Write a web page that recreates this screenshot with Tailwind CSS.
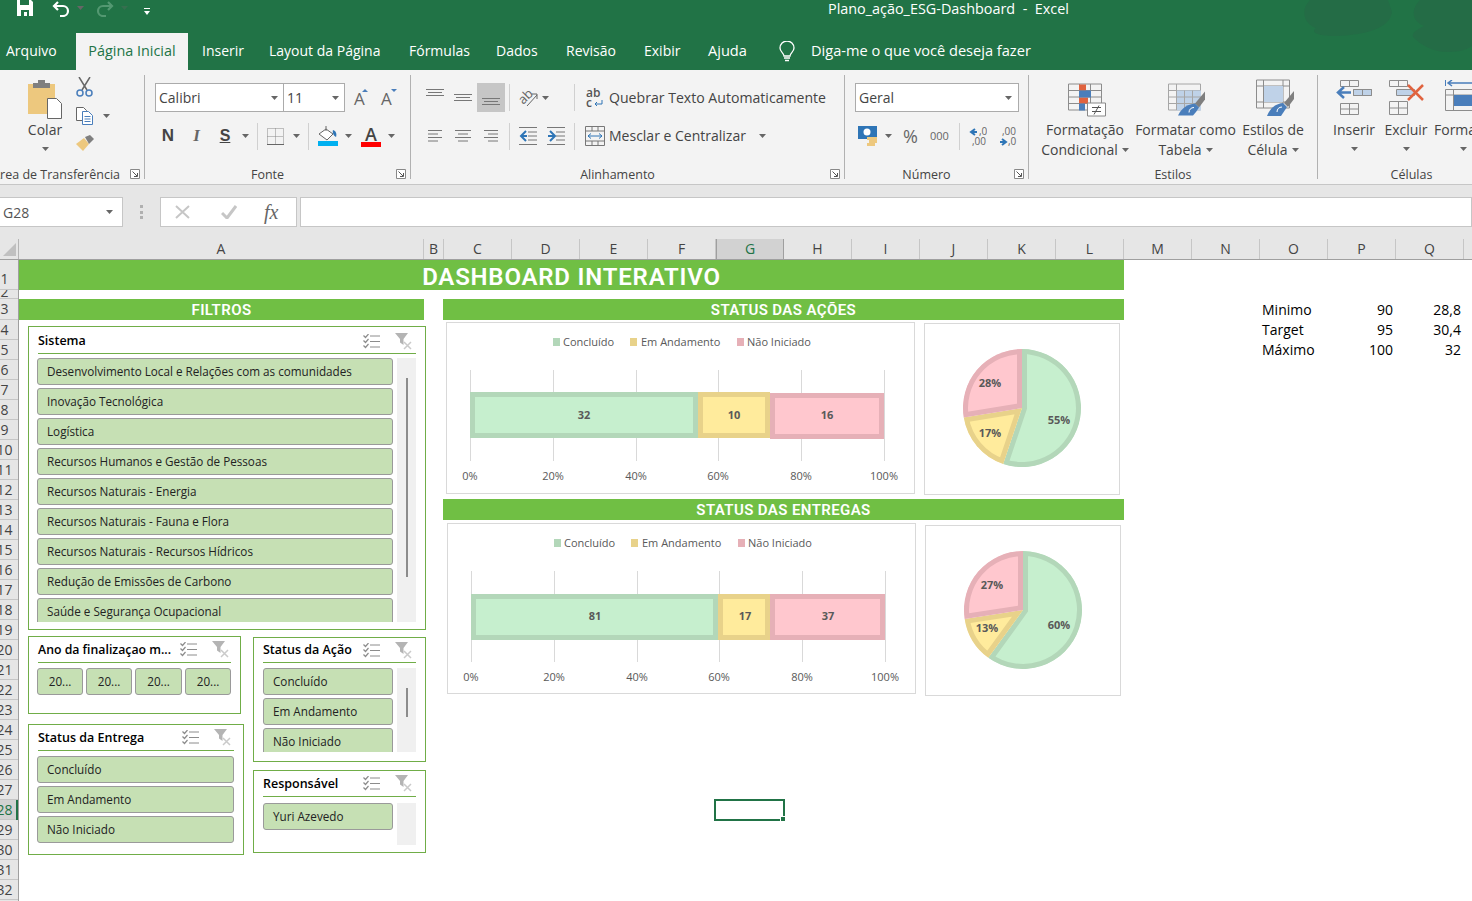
<!DOCTYPE html>
<html lang="pt-BR">
<head>
  <meta charset="UTF-8">
  <title>Plano_ação_ESG-Dashboard - Excel</title>
  <script src="https://cdn.jsdelivr.net/npm/@tailwindcss/browser@4"></script>
</head>
<body class="bg-white overflow-hidden font-['Open_Sans',sans-serif] text-[#444]">

<!-- icones repetidos -->
<svg class="hidden">
  <symbol id="arrow" viewBox="0 0 7 4"><path d="M0 0h7L3.500 4z" fill="#666"/></symbol>
  <symbol id="launcher" viewBox="0 0 10 10"><path d="M.5.500h9v9h-9z" fill="#fff" stroke="#888"/><path d="M2.500 2.500l4.500 4.500M7.500 4v3.500H4" fill="none" stroke="#555"/></symbol>
  <symbol id="multi" viewBox="0 0 17 15"><path d="M7 2h10M7 7.500h10M7 13h10" stroke="#8c8c8c"/><path d="M.5 1.500l2 2 3-3.500M.5 6.500l2 2 3-3.500M.5 11.500l2 2 3-3.500" fill="none" stroke="#8c8c8c" stroke-width="1.200"/></symbol>
  <symbol id="clear" viewBox="0 0 18 17"><path d="M0 0h13L8.500 6v6L5 9.500V6z" fill="#b4b4b4"/><path d="M9 9l7 7M16 9l-7 7" stroke="#cacaca" stroke-width="1.500"/></symbol>
</svg>

<div class="w-[1472px] h-[901px] overflow-hidden flex flex-col">

  <!-- barra de titulo + abas -->
  <div class="relative bg-[#217346] h-[70px] shrink-0 text-white overflow-hidden">
    <svg class="absolute right-0 top-0 w-[180px] h-[70px]" viewBox="0 0 180 70"><path d="M18 0C8 10 12 24 24 28C16 34 34 38 58 35C80 33 98 26 100 12L96 0zM122 38C128 44 140 52 156 52C168 52 176 49 180 46V0H128C120 8 118 20 132 26C124 30 118 34 122 38z" fill="#246c46"/></svg>
    <div class="relative flex items-start h-[33px]">
      <svg class="ml-[17px] -mt-[1px] w-[16px] h-[17px]" viewBox="0 0 16 17"><path d="M0 0h13l3 3v14H0z" fill="#fff"/><path d="M3 1h9v5H3zM4 11h8v6h-2v-4H7v4H4z" fill="#217346"/></svg>
      <svg class="ml-[19px] mt-[1px] w-[18px] h-[16px]" viewBox="0 0 18 16"><path d="M6 1L2 5l4 4M2 5h9a5 5 0 0 1 0 10H8" fill="none" stroke="#fff" stroke-width="2.200"/></svg>
      <svg class="ml-[7px] mt-[6px] w-[7px] h-[4px]"><use href="#arrow"/></svg>
      <svg class="ml-[12px] mt-[1px] w-[18px] h-[16px] opacity-40" viewBox="0 0 18 16"><path d="M12 1l4 4-4 4M16 5H7a5 5 0 0 0 0 10h3" fill="none" stroke="#9fd0b3" stroke-width="2.200"/></svg>
      <svg class="ml-[7px] mt-[6px] w-[7px] h-[4px] opacity-30"><use href="#arrow"/></svg>
      <svg class="ml-[16px] mt-[8px] w-[6px] h-[7px]" viewBox="0 0 6 7"><path d="M0 0h6v1H0zM0 3h6L3 7z" fill="#fff"/></svg>
      <span class="absolute left-[828px] top-0 text-[14.4px] leading-[18px] whitespace-pre">Plano_ação_ESG-Dashboard  -  Excel</span>
    </div>
    <div class="relative flex h-[37px] text-[14px] leading-[35px] whitespace-nowrap">
      <span class="w-[76px] pl-[6px]">Arquivo</span>
      <span class="w-[112px] bg-[#f3f3f3] text-[#217346] text-center text-[14.4px]">Página Inicial</span>
      <span class="ml-[14px] w-[67px]">Inserir</span>
      <span class="w-[140px]">Layout da Página</span>
      <span class="w-[87px]">Fórmulas</span>
      <span class="w-[70px]">Dados</span>
      <span class="w-[78px]">Revisão</span>
      <span class="w-[64px]">Exibir</span>
      <span class="w-[71px] text-[14.6px]">Ajuda</span>
      <svg class="mt-[8px] w-[16px] h-[22px]" viewBox="0 0 16 22"><path d="M5 15c0-3-4-4-4-8a7 7 0 0 1 14 0c0 4-4 5-4 8z" fill="none" stroke="#fff" stroke-width="1.300"/><path d="M5 17h6M6 19.500h4" stroke="#fff" stroke-width="1.500"/></svg>
      <span class="ml-[16px] text-[14.6px]">Diga-me o que você deseja fazer</span>
    </div>
  </div>

  <!-- faixa de opcoes -->
  <div class="flex h-[115px] shrink-0 bg-[#f3f3f3] border-b border-[#c6c6c6] pt-[5px] text-[14px] leading-[20px] whitespace-nowrap overflow-hidden">

    <!-- area de transferencia -->
    <div class="relative w-[145px] shrink-0 h-[104px] border-r border-[#b1b1b1]">
      <div class="flex h-[89px] pl-[27px]">
        <div class="w-[36px] flex flex-col items-center">
          <svg class="mt-[5px] w-[34px] h-[39px]" viewBox="0 0 34 39"><path d="M0 4h27v30H0z" fill="#edc87e"/><path d="M5 3h5V0h7v3h5v5H5z" fill="#7f7f7f"/><path d="M19.500 18.500h9l5 5v15h-14z" fill="#fff" stroke="#666"/></svg>
          <span class="mt-[1px]">Colar</span>
          <svg class="mt-[7px] w-[7px] h-[4px]"><use href="#arrow"/></svg>
        </div>
        <div class="ml-[13px] pt-[2px] flex flex-col gap-[9px]">
          <svg class="w-[17px] h-[20px]" viewBox="0 0 17 20"><path d="M3 0l8 13M14 0L6 13" stroke="#666" stroke-width="1.500"/><circle cx="4" cy="16" r="3" fill="none" stroke="#4a7ebb" stroke-width="1.500"/><circle cx="13" cy="16" r="3" fill="none" stroke="#4a7ebb" stroke-width="1.500"/></svg>
          <div class="flex items-center h-[20px]">
            <svg class="w-[17px] h-[18px]" viewBox="0 0 17 18"><path d="M.5.500h7l3 3v10H.5z" fill="#fff" stroke="#666"/><path d="M6.500 4.500h6l4 4v9h-10z" fill="#fff" stroke="#4a7ebb"/><path d="M8.500 9.500h6M8.500 12h6M8.500 14.500h6" stroke="#4a7ebb"/></svg>
            <svg class="ml-[10px] w-[7px] h-[4px]"><use href="#arrow"/></svg>
          </div>
          <svg class="w-[18px] h-[16px]" viewBox="0 0 18 16"><path d="M0 9l8-6 5 6-6 7z" fill="#edc87e"/><path d="M9 2l5-2 4 4-5 5z" fill="#7f7f7f"/></svg>
        </div>
      </div>
      <div class="h-[20px] flex justify-end pr-[24px] text-[12.5px] leading-[21px]">Área de Transferência</div>
      <svg class="absolute right-[4px] bottom-[0px] w-[10px] h-[10px]"><use href="#launcher"/></svg>
    </div>

    <!-- fonte -->
    <div class="relative w-[266px] shrink-0 h-[104px] border-r border-[#b1b1b1]">
      <div class="h-[89px] pl-[10px] pt-[8px]">
        <div class="flex items-center h-[29px]">
          <div class="w-[129px] h-[29px] bg-white border border-[#ababab] flex items-center justify-between px-[3px] pr-[5px]">Calibri<svg class="w-[7px] h-[4px]"><use href="#arrow"/></svg></div>
          <div class="-ml-px w-[62px] h-[29px] bg-white border border-[#ababab] flex items-center justify-between px-[3px] pr-[5px]">11<svg class="w-[7px] h-[4px]"><use href="#arrow"/></svg></div>
          <div class="relative ml-[9px] w-[16px] h-[20px] text-[17px] leading-[22px] text-[#666]">A<svg class="absolute left-[8px] top-[1px] w-[6px] h-[3px]" viewBox="0 0 6 3"><path d="M0 3l3-3 3 3z" fill="#4a7ebb"/></svg></div>
          <div class="relative ml-[11px] w-[16px] h-[20px] text-[17px] leading-[22px] text-[#666]">A<svg class="absolute left-[10px] top-[1px] w-[6px] h-[3px]" viewBox="0 0 6 3"><path d="M0 0l3 3 3-3z" fill="#4a7ebb"/></svg></div>
        </div>
        <div class="flex items-center h-[24px] mt-[12px] -ml-px">
          <span class="w-[28px] text-center font-bold text-[17px] font-['Liberation_Sans',sans-serif]">N</span>
          <span class="w-[29px] text-center italic font-bold text-[17px] text-[#666] font-['Liberation_Serif',serif]">I</span>
          <span class="w-[28px] text-center font-bold text-[16px] underline font-['Liberation_Sans',sans-serif]">S</span>
          <svg class="ml-[3px] w-[7px] h-[4px]"><use href="#arrow"/></svg>
          <span class="ml-[8px] w-px h-[27px] bg-[#d0d0d0]"></span>
          <svg class="ml-[9px] w-[17px] h-[17px]" viewBox="0 0 17 17"><path d="M.5.500h16v16H.5zM8.500.500v16M.5 8.500h16" fill="none" stroke="#888" stroke-dasharray="1 1"/><path d="M0 16.500h17" stroke="#666"/></svg>
          <svg class="ml-[9px] w-[7px] h-[4px]"><use href="#arrow"/></svg>
          <span class="ml-[8px] w-px h-[27px] bg-[#d0d0d0]"></span>
          <svg class="ml-[9px] w-[20px] h-[20px]" viewBox="0 0 20 20"><path d="M1 8l7-5 7 5-6 6z" fill="#fff" stroke="#666"/><path d="M8 0v5" stroke="#666"/><path d="M15 4c3 1 4 4 3 7-2-1-4-4-3-7z" fill="#2e75b6"/><path d="M0 15h20v5H0z" fill="#00b0f0"/></svg>
          <svg class="ml-[7px] w-[7px] h-[4px]"><use href="#arrow"/></svg>
          <div class="ml-[9px] w-[20px] h-[21px] flex flex-col items-center">
            <span class="text-[18px] leading-[16px] font-semibold">A</span>
            <span class="w-[20px] h-[5px] bg-[#f00]"></span>
          </div>
          <svg class="ml-[7px] w-[7px] h-[4px]"><use href="#arrow"/></svg>
        </div>
      </div>
      <div class="h-[20px] pr-[20px] text-center text-[12.5px] leading-[21px]">Fonte</div>
      <svg class="absolute right-[4px] bottom-[0px] w-[10px] h-[10px]"><use href="#launcher"/></svg>
    </div>

    <!-- alinhamento -->
    <div class="relative w-[434px] shrink-0 h-[104px] border-r border-[#b1b1b1]">
      <div class="h-[89px] pl-[10px] pt-[8px]">
        <div class="flex items-center h-[29px]">
          <div class="w-[28px] h-[29px] flex justify-center pt-[6px]"><svg class="w-[18px] h-[8px]" viewBox="0 0 18 8"><path d="M0 .500h18M2 3.500h14M0 6.500h18" stroke="#777"/></svg></div>
          <div class="w-[28px] h-[29px] flex justify-center pt-[11px]"><svg class="w-[18px] h-[8px]" viewBox="0 0 18 8"><path d="M0 .500h18M2 3.500h14M0 6.500h18" stroke="#777"/></svg></div>
          <div class="w-[28px] h-[29px] flex justify-center pt-[15px] bg-[#c6c6c6]"><svg class="w-[18px] h-[8px]" viewBox="0 0 18 8"><path d="M0 .500h18M2 3.500h14M0 6.500h18" stroke="#777"/></svg></div>
          <span class="ml-[4px] w-px h-[27px] bg-[#d0d0d0]"></span>
          <svg class="ml-[8px] w-[20px] h-[20px]" viewBox="0 0 20 20"><text transform="rotate(-45 8 10)" x="1" y="13" font-size="13" fill="#666">ab</text><path d="M9 18L19 7M14 6h5v5" fill="none" stroke="#666"/></svg>
          <svg class="ml-[4px] w-[7px] h-[4px]"><use href="#arrow"/></svg>
          <span class="ml-[25px] w-px h-[27px] bg-[#d0d0d0]"></span>
          <svg class="ml-[11px] w-[17px] h-[20px]" viewBox="0 0 17 20"><text x="0" y="9" font-size="12" font-weight="600" fill="#555">ab</text><text x="0" y="19" font-size="12" font-weight="600" fill="#555">c</text><path d="M16 12v4H9M11 14l-2 2 2 2" fill="none" stroke="#2e75b6"/></svg>
          <span class="ml-[6px] text-[14.1px]">Quebrar Texto Automaticamente</span>
        </div>
        <div class="flex items-center h-[24px] mt-[12px]">
          <div class="w-[28px] flex justify-center"><svg class="w-[14px] h-[12px]" viewBox="0 0 14 12"><path d="M0 .500h14M0 4h10M0 7.500h14M0 11h10" stroke="#777"/></svg></div>
          <div class="w-[28px] flex justify-center"><svg class="w-[16px] h-[12px]" viewBox="0 0 16 12"><path d="M0 .500h16M3 4h10M0 7.500h16M3 11h10" stroke="#777"/></svg></div>
          <div class="w-[28px] flex justify-center"><svg class="w-[14px] h-[12px]" viewBox="0 0 14 12"><path d="M0 .500h14M4 4h10M0 7.500h14M4 11h10" stroke="#777"/></svg></div>
          <span class="ml-[4px] w-px h-[27px] bg-[#d0d0d0]"></span>
          <svg class="ml-[9px] w-[18px] h-[18px]" viewBox="0 0 18 18"><path d="M0 .500h18M9 5h9M9 9h9M9 13h9M0 17.500h18" stroke="#777"/><path d="M7 4L2 9l5 5M2 9h6" fill="none" stroke="#2e75b6" stroke-width="2"/></svg>
          <svg class="ml-[10px] w-[18px] h-[18px]" viewBox="0 0 18 18"><path d="M0 .500h18M9 5h9M9 9h9M9 13h9M0 17.500h18" stroke="#777"/><path d="M3 4l5 5-5 5M8 9H1" fill="none" stroke="#2e75b6" stroke-width="2"/></svg>
          <span class="ml-[9px] w-px h-[27px] bg-[#d0d0d0]"></span>
          <svg class="ml-[10px] w-[20px] h-[20px]" viewBox="0 0 20 20"><path d="M.5.500h19v19H.5zM.5 5h19M.5 15h19M7 .500V5M13 .500V5M7 15v5M13 15v5" fill="none" stroke="#777"/><path d="M3 10h14M6 7.500L3 10l3 2.500M14 7.500l3 2.500-3 2.500" fill="none" stroke="#2e75b6"/></svg>
          <span class="ml-[4px]">Mesclar e Centralizar</span>
          <svg class="ml-[13px] w-[7px] h-[4px]"><use href="#arrow"/></svg>
        </div>
      </div>
      <div class="h-[20px] pr-[20px] text-center text-[12.5px] leading-[21px]">Alinhamento</div>
      <svg class="absolute right-[4px] bottom-[0px] w-[10px] h-[10px]"><use href="#launcher"/></svg>
    </div>

    <!-- numero -->
    <div class="relative w-[184px] shrink-0 h-[104px] border-r border-[#b1b1b1]">
      <div class="h-[89px] pl-[10px] pt-[8px]">
        <div class="w-[164px] h-[29px] bg-white border border-[#ababab] flex items-center justify-between px-[3px] pr-[6px]">Geral<svg class="w-[7px] h-[4px]"><use href="#arrow"/></svg></div>
        <div class="flex items-center h-[24px] mt-[12px] ml-[3px]">
          <svg class="w-[20px] h-[20px]" viewBox="0 0 20 20"><path d="M0 0h19v13H0z" fill="#2e75b6"/><circle cx="9" cy="6" r="3.500" fill="#fff"/><path d="M9 11h10v3H9zM11 14h8v3h-8zM9 17h8v3H9z" fill="#edc87e"/></svg>
          <svg class="ml-[7px] w-[7px] h-[4px]"><use href="#arrow"/></svg>
          <span class="ml-[11px] w-[18px] text-[18px] leading-[20px] text-[#666]">%</span>
          <span class="ml-[9px] w-[21px] text-[11px] text-[#666]">000</span>
          <span class="ml-[8px] w-px h-[27px] bg-[#d0d0d0]"></span>
          <svg class="ml-[9px] w-[18px] h-[20px]" viewBox="0 0 18 20"><path d="M6 3L2 6l4 3M2 6h6" fill="none" stroke="#2e75b6" stroke-width="2"/><text x="10" y="9" font-size="10" fill="#666">,0</text><text x="3" y="19" font-size="10" fill="#666">,00</text></svg>
          <svg class="ml-[12px] w-[18px] h-[20px]" viewBox="0 0 18 20"><text x="3" y="9" font-size="10" fill="#666">,00</text><path d="M3 13l4 3-4 3M7 16H1" fill="none" stroke="#2e75b6" stroke-width="2"/><text x="9" y="19" font-size="10" fill="#666">,0</text></svg>
        </div>
      </div>
      <div class="h-[20px] pr-[20px] text-center text-[12.5px] leading-[21px]">Número</div>
      <svg class="absolute right-[4px] bottom-[0px] w-[10px] h-[10px]"><use href="#launcher"/></svg>
    </div>

    <!-- estilos -->
    <div class="w-[289px] shrink-0 h-[104px] border-r border-[#b1b1b1]">
      <div class="h-[89px] pl-[6px] flex">
        <div class="w-[100px] flex flex-col items-center">
          <svg class="mt-[7px] mb-[3px] ml-[3px] w-[38px] h-[35px]" viewBox="0 0 38 34"><path d="M.5 1.500h33v26H.5zM11.500 1.500v26M22.500 1.500v26M.5 8h33M.5 14.500h33M.5 21h33" fill="none" stroke="#8c8c8c"/><path d="M11 2h7v6h-7zM11 15h9v6h-9z" fill="#e0633f"/><path d="M11 8h12v7H11zM11 21h6v7h-6z" fill="#4a7ebb"/><path d="M19.500 20.500h18v13h-18z" fill="#fff" stroke="#888"/><path d="M24 25h9M24 29h9M31 23l-5 9" stroke="#555" fill="none"/></svg>
          <span>Formatação</span>
          <span class="flex items-center">Condicional<svg class="ml-[4px] w-[7px] h-[4px]"><use href="#arrow"/></svg></span>
        </div>
        <div class="w-[101px] flex flex-col items-center">
          <svg class="mt-[7px] mb-[3px] ml-[3px] w-[38px] h-[35px]" viewBox="0 0 38 34"><path d="M.5 1.500h32v26H.5zM8.500 1.500v26M.5 8h32M.5 14.500h32M.5 21h32" fill="none" stroke="#a6a6a6"/><path d="M9 8h24v20H9z" fill="#bfd2e8"/><path d="M16.500 8v20M24.500 8v20M9 14.500h24M9 21h24" stroke="#a6a6a6"/><path d="M37 9v8l-6 8-4-4z" fill="#7f7f7f"/><path d="M27 21l4 4c-2 3-4 6-6 8H10c2-4 6-11 17-12z" fill="#4a7ebb"/><path d="M21 30c0-3 2-5 5-5" stroke="#fff" fill="none"/></svg>
          <span>Formatar como</span>
          <span class="flex items-center">Tabela<svg class="ml-[4px] w-[7px] h-[4px]"><use href="#arrow"/></svg></span>
        </div>
        <div class="w-[74px] flex flex-col items-center">
          <svg class="mt-[4px] mb-[4px] ml-[3px] w-[38px] h-[37px]" viewBox="0 0 38 37"><path d="M.5 1h33v28H.5zM7.500 1v28M27 1v28M.5 7h33M.5 23h33" fill="none" stroke="#8c8c8c"/><path d="M8 7h19v16H8z" fill="#bfd2e8"/><path d="M38 12v8l-6 8-4-4z" fill="#7f7f7f"/><path d="M27 24l4 4c-2 3-4 6-6 9H11c2-5 6-12 16-13z" fill="#4a7ebb"/><path d="M21 33c0-3 2-5 5-5" stroke="#fff" fill="none"/></svg>
          <span>Estilos de</span>
          <span class="flex items-center">Célula<svg class="ml-[4px] w-[7px] h-[4px]"><use href="#arrow"/></svg></span>
        </div>
      </div>
      <div class="h-[20px] text-center text-[12.5px] leading-[21px]">Estilos</div>
    </div>

    <!-- celulas -->
    <div class="w-[187px] shrink-0 h-[104px]">
      <div class="h-[89px] pl-[10px] flex">
        <div class="w-[52px] flex flex-col items-center">
          <svg class="mt-[5px] mb-[5px] w-[37px] h-[35px]" viewBox="0 0 37 35"><path d="M4.500.500h18v6h-18zM13.500.500v6M17.500 9.500h18v6h-18zM26.500 9.500v6M4.500 23.500h18v11h-18zM13.500 23.500v11M4.500 29h18" fill="none" stroke="#8c8c8c"/><path d="M18 10h17v5H18z" fill="#bfd2e8"/><path d="M17.500 9.500h18v6h-18zM26.500 9.500v6" fill="none" stroke="#8c8c8c"/><path d="M15 12.500H3M8 7l-6 5.500L8 18" fill="none" stroke="#4a7ebb" stroke-width="2.500"/></svg>
          <span>Inserir</span>
          <svg class="mt-[7px] w-[7px] h-[4px]"><use href="#arrow"/></svg>
        </div>
        <div class="w-[52px] flex flex-col items-center">
          <svg class="mt-[5px] mb-[5px] w-[37px] h-[35px]" viewBox="0 0 37 35"><path d="M1.500.500h18v6h-18zM10.500.500v6M8.500 9.500h18v6h-18zM1.500 21.500h18v13h-18zM10.500 21.500v13M1.500 28h18" fill="none" stroke="#8c8c8c"/><path d="M9 10h17v5H9z" fill="#bfd2e8"/><path d="M20 5l15 15M35 5L20 20" stroke="#e0633f" stroke-width="2.500"/></svg>
          <span>Excluir</span>
          <svg class="mt-[7px] w-[7px] h-[4px]"><use href="#arrow"/></svg>
        </div>
        <div class="w-[52px] flex flex-col">
          <svg class="mt-[5px] mb-[5px] ml-[13px] w-[37px] h-[35px]" viewBox="0 0 37 35"><path d="M.5 0v6M36.500 0v6" stroke="#4a7ebb"/><path d="M3 3h30M7 0L3 3l4 3M29 0l4 3-4 3" fill="none" stroke="#4a7ebb" stroke-width="1.500"/><path d="M.5 9.500h36v21H.5zM8.500 9.500v21M28.500 9.500v21M.5 15h36" fill="none" stroke="#8c8c8c"/><path d="M9 15h19v11H9z" fill="#4a7ebb"/></svg>
          <span class="ml-[2px]">Formatar</span>
          <svg class="mt-[7px] ml-[28px] w-[7px] h-[4px]"><use href="#arrow"/></svg>
        </div>
      </div>
      <div class="h-[20px] text-center text-[12.5px] leading-[21px]">Células</div>
    </div>
  </div>

  <!-- barra de formulas -->
  <div class="flex items-start h-[54px] shrink-0 bg-[#e6e6e6] pt-[12px]">
    <div class="w-[123px] h-[30px] bg-white border border-[#c6c6c6] border-l-0 flex items-center justify-between pl-[3px] pr-[9px] text-[14px] text-[#555]">G28<svg class="w-[7px] h-[4px]"><use href="#arrow"/></svg></div>
    <div class="ml-[17px] mt-[8px] w-[3px] h-[14px] flex flex-col justify-between">
      <span class="h-[3px] bg-[#b0b0b0]"></span><span class="h-[3px] bg-[#b0b0b0]"></span><span class="h-[3px] bg-[#b0b0b0]"></span>
    </div>
    <div class="ml-[17px] w-[137px] h-[30px] bg-white border border-[#c6c6c6] flex items-center">
      <svg class="ml-[14px] w-[15px] h-[14px]" viewBox="0 0 15 14"><path d="M1 1l13 12M14 1L1 13" stroke="#c6c6c6" stroke-width="2"/></svg>
      <svg class="ml-[31px] w-[16px] h-[14px]" viewBox="0 0 16 14"><path d="M1 8l5 5L15 1" fill="none" stroke="#c6c6c6" stroke-width="3"/></svg>
      <span class="ml-[27px] italic text-[20px] text-[#666] font-['Liberation_Serif',serif]">fx</span>
    </div>
    <div class="ml-[3px] flex-1 h-[30px] bg-white border border-[#c6c6c6]"></div>
  </div>

  <!-- cabecalho das colunas -->
  <div class="flex h-[21px] shrink-0 bg-[#e6e6e6] border-b border-[#9f9f9f] text-[14px] leading-[20px] text-center text-[#444]">
    <div class="w-[19px] h-[20px] border-r border-[#b5b5b5] flex items-end justify-end pr-[2px] pb-[3px]"><svg class="w-[13px] h-[13px]" viewBox="0 0 13 13"><path d="M13 0v13H0z" fill="#c0c0c0"/></svg></div>
    <div class="w-[405px] border-r border-[#c6c6c6]">A</div>
    <div class="w-[20px] border-r border-[#c6c6c6]">B</div>
    <div class="w-[68px] border-r border-[#c6c6c6]">C</div>
    <div class="w-[68px] border-r border-[#c6c6c6]">D</div>
    <div class="w-[68px] border-r border-[#c6c6c6]">E</div>
    <div class="w-[68px] border-r border-[#c6c6c6]">F</div>
    <div class="w-[68px] border-r border-[#9f9f9f] border-l border-l-[#9f9f9f] bg-[#d2d2d2] text-[#217346]">G</div>
    <div class="w-[68px] border-r border-[#c6c6c6]">H</div>
    <div class="w-[68px] border-r border-[#c6c6c6]">I</div>
    <div class="w-[68px] border-r border-[#c6c6c6]">J</div>
    <div class="w-[68px] border-r border-[#c6c6c6]">K</div>
    <div class="w-[68px] border-r border-[#c6c6c6]">L</div>
    <div class="w-[68px] border-r border-[#c6c6c6]">M</div>
    <div class="w-[68px] border-r border-[#c6c6c6]">N</div>
    <div class="w-[68px] border-r border-[#c6c6c6]">O</div>
    <div class="w-[68px] border-r border-[#c6c6c6]">P</div>
    <div class="w-[68px] border-r border-[#c6c6c6]">Q</div>
  </div>

  <!-- planilha -->
  <div class="flex flex-1 min-h-0">

    <!-- numeros das linhas -->
    <div class="w-[19px] shrink-0 bg-[#e6e6e6] border-r border-[#9f9f9f] text-[14px] overflow-hidden">
      <div class="h-[30px] border-b border-[#c6c6c6] flex items-end"><span class="w-[9px] flex justify-center">1</span></div>
      <div class="h-[9px] border-b border-[#c6c6c6] overflow-hidden leading-[4px]"><span class="w-[9px] flex justify-center">2</span></div>
      <div class="h-[21px] border-b border-[#c6c6c6] leading-[20px]"><span class="w-[9px] flex justify-center">3</span></div>
      <div class="h-[20px] border-b border-[#c6c6c6] leading-[19px]"><span class="w-[9px] flex justify-center">4</span></div>
      <div class="h-[20px] border-b border-[#c6c6c6] leading-[19px]"><span class="w-[9px] flex justify-center">5</span></div>
      <div class="h-[20px] border-b border-[#c6c6c6] leading-[19px]"><span class="w-[9px] flex justify-center">6</span></div>
      <div class="h-[20px] border-b border-[#c6c6c6] leading-[19px]"><span class="w-[9px] flex justify-center">7</span></div>
      <div class="h-[20px] border-b border-[#c6c6c6] leading-[19px]"><span class="w-[9px] flex justify-center">8</span></div>
      <div class="h-[20px] border-b border-[#c6c6c6] leading-[19px]"><span class="w-[9px] flex justify-center">9</span></div>
      <div class="h-[20px] border-b border-[#c6c6c6] leading-[19px]"><span class="w-[9px] flex justify-center">10</span></div>
      <div class="h-[20px] border-b border-[#c6c6c6] leading-[19px]"><span class="w-[9px] flex justify-center">11</span></div>
      <div class="h-[20px] border-b border-[#c6c6c6] leading-[19px]"><span class="w-[9px] flex justify-center">12</span></div>
      <div class="h-[20px] border-b border-[#c6c6c6] leading-[19px]"><span class="w-[9px] flex justify-center">13</span></div>
      <div class="h-[20px] border-b border-[#c6c6c6] leading-[19px]"><span class="w-[9px] flex justify-center">14</span></div>
      <div class="h-[20px] border-b border-[#c6c6c6] leading-[19px]"><span class="w-[9px] flex justify-center">15</span></div>
      <div class="h-[20px] border-b border-[#c6c6c6] leading-[19px]"><span class="w-[9px] flex justify-center">16</span></div>
      <div class="h-[20px] border-b border-[#c6c6c6] leading-[19px]"><span class="w-[9px] flex justify-center">17</span></div>
      <div class="h-[20px] border-b border-[#c6c6c6] leading-[19px]"><span class="w-[9px] flex justify-center">18</span></div>
      <div class="h-[20px] border-b border-[#c6c6c6] leading-[19px]"><span class="w-[9px] flex justify-center">19</span></div>
      <div class="h-[20px] border-b border-[#c6c6c6] leading-[19px]"><span class="w-[9px] flex justify-center">20</span></div>
      <div class="h-[20px] border-b border-[#c6c6c6] leading-[19px]"><span class="w-[9px] flex justify-center">21</span></div>
      <div class="h-[20px] border-b border-[#c6c6c6] leading-[19px]"><span class="w-[9px] flex justify-center">22</span></div>
      <div class="h-[20px] border-b border-[#c6c6c6] leading-[19px]"><span class="w-[9px] flex justify-center">23</span></div>
      <div class="h-[20px] border-b border-[#c6c6c6] leading-[19px]"><span class="w-[9px] flex justify-center">24</span></div>
      <div class="h-[20px] border-b border-[#c6c6c6] leading-[19px]"><span class="w-[9px] flex justify-center">25</span></div>
      <div class="h-[20px] border-b border-[#c6c6c6] leading-[19px]"><span class="w-[9px] flex justify-center">26</span></div>
      <div class="h-[20px] border-b border-[#c6c6c6] leading-[19px]"><span class="w-[9px] flex justify-center">27</span></div>
      <div class="h-[20px] border-b border-[#c6c6c6] leading-[19px] bg-[#d2d2d2] text-[#217346] relative"><span class="w-[9px] flex justify-center">28</span><span class="absolute right-0 top-0 w-[2px] h-[20px] bg-[#217346]"></span></div>
      <div class="h-[20px] border-b border-[#c6c6c6] leading-[19px]"><span class="w-[9px] flex justify-center">29</span></div>
      <div class="h-[20px] border-b border-[#c6c6c6] leading-[19px]"><span class="w-[9px] flex justify-center">30</span></div>
      <div class="h-[20px] border-b border-[#c6c6c6] leading-[19px]"><span class="w-[9px] flex justify-center">31</span></div>
      <div class="h-[20px] border-b border-[#c6c6c6] leading-[19px]"><span class="w-[9px] flex justify-center">32</span></div>
    </div>

    <div class="relative flex-1">
      <!-- celula selecionada G28 -->
      <div class="absolute left-[695px] top-[539px] w-[71px] h-[22px] border-2 border-[#217346]">
        <span class="absolute -right-[3px] -bottom-[3px] w-[6px] h-[6px] bg-[#217346] border border-white"></span>
      </div>

      <div class="h-[30px] w-[1105px] bg-[#70bf44] text-white text-center text-[24px] leading-[34px] font-semibold tracking-[0.8px] font-['Roboto',sans-serif]">DASHBOARD INTERATIVO</div>

      <div class="flex mt-[9px]">

        <!-- filtros -->
        <div class="w-[405px] shrink-0">
          <div class="h-[21px] bg-[#70bf44] text-white text-center text-[15px] leading-[22px] font-semibold tracking-[0.4px] font-['Roboto',sans-serif]">FILTROS</div>

          <div class="ml-[9px] mt-[6px] w-[398px] h-[304px] border border-[#70ad47] px-[9px] pt-[3px]">
            <div class="flex items-center h-[24px] border-b border-[#70ad47] box-content -mt-[1px]">
              <span class="text-[12.5px] font-semibold text-black">Sistema</span>
              <svg class="ml-auto w-[17px] h-[15px]"><use href="#multi"/></svg>
              <svg class="ml-[15px] mr-[3px] w-[18px] h-[17px]"><use href="#clear"/></svg>
            </div>
            <div class="flex mt-[4px] h-[264px]">
              <div class="w-[356px] -ml-px flex flex-col gap-[3px] overflow-hidden text-[11.7px] text-[#222]">
                <div class="h-[27px] shrink-0 bg-[#c6e0b4] border border-[#9a9a9a] rounded-[3px] pl-[9px] leading-[25px]">Desenvolvimento Local e Relações com as comunidades</div>
                <div class="h-[27px] shrink-0 bg-[#c6e0b4] border border-[#9a9a9a] rounded-[3px] pl-[9px] leading-[25px]">Inovação Tecnológica</div>
                <div class="h-[27px] shrink-0 bg-[#c6e0b4] border border-[#9a9a9a] rounded-[3px] pl-[9px] leading-[25px]">Logística</div>
                <div class="h-[27px] shrink-0 bg-[#c6e0b4] border border-[#9a9a9a] rounded-[3px] pl-[9px] leading-[25px]">Recursos Humanos e Gestão de Pessoas</div>
                <div class="h-[27px] shrink-0 bg-[#c6e0b4] border border-[#9a9a9a] rounded-[3px] pl-[9px] leading-[25px]">Recursos Naturais - Energia</div>
                <div class="h-[27px] shrink-0 bg-[#c6e0b4] border border-[#9a9a9a] rounded-[3px] pl-[9px] leading-[25px]">Recursos Naturais - Fauna e Flora</div>
                <div class="h-[27px] shrink-0 bg-[#c6e0b4] border border-[#9a9a9a] rounded-[3px] pl-[9px] leading-[25px]">Recursos Naturais - Recursos Hídricos</div>
                <div class="h-[27px] shrink-0 bg-[#c6e0b4] border border-[#9a9a9a] rounded-[3px] pl-[9px] leading-[25px]">Redução de Emissões de Carbono</div>
                <div class="h-[27px] shrink-0 bg-[#c6e0b4] border border-[#9a9a9a] rounded-[3px] pl-[9px] leading-[25px]">Saúde e Segurança Ocupacional</div>
              </div>
              <div class="ml-[4px] w-[19px] bg-[#f0f0f0] flex justify-center pt-[20px]"><span class="w-[2px] h-[199px] bg-[#8c8c8c]"></span></div>
            </div>
          </div>

          <div class="flex ml-[9px] mt-[6px]">
            <div class="w-[225px] shrink-0">
              <!-- ano -->
              <div class="w-[213px] h-[78px] border border-[#70ad47] px-[9px]">
                <div class="flex items-center h-[26px] border-b border-[#70ad47]">
                  <span class="mt-[1px] text-[12.3px] font-semibold text-black whitespace-nowrap">Ano da finalizaçao m...</span>
                  <svg class="ml-auto w-[17px] h-[15px]"><use href="#multi"/></svg>
                  <svg class="ml-[15px] mr-[1px] w-[18px] h-[17px]"><use href="#clear"/></svg>
                </div>
                <div class="flex gap-[3px] mt-[5px] -ml-px text-[11.7px] text-[#222] text-center">
                  <div class="w-[46px] h-[27px] bg-[#c6e0b4] border border-[#9a9a9a] rounded-[3px] leading-[25px]">20...</div>
                  <div class="w-[46px] h-[27px] bg-[#c6e0b4] border border-[#9a9a9a] rounded-[3px] leading-[25px]">20...</div>
                  <div class="w-[47px] h-[27px] bg-[#c6e0b4] border border-[#9a9a9a] rounded-[3px] leading-[25px]">20...</div>
                  <div class="w-[46px] h-[27px] bg-[#c6e0b4] border border-[#9a9a9a] rounded-[3px] leading-[25px]">20...</div>
                </div>
              </div>
              <!-- status da entrega -->
              <div class="w-[216px] h-[131px] mt-[10px] border border-[#70ad47] px-[9px]">
                <div class="flex items-center h-[26px] border-b border-[#70ad47]">
                  <span class="mt-[1px] text-[12.5px] font-semibold text-black">Status da Entrega</span>
                  <svg class="ml-auto w-[17px] h-[15px]"><use href="#multi"/></svg>
                  <svg class="ml-[15px] mr-[2px] w-[18px] h-[17px]"><use href="#clear"/></svg>
                </div>
                <div class="flex flex-col gap-[3px] mt-[5px] -ml-px text-[11.7px] text-[#222]">
                  <div class="h-[27px] bg-[#c6e0b4] border border-[#9a9a9a] rounded-[3px] pl-[9px] leading-[25px]">Concluído</div>
                  <div class="h-[27px] bg-[#c6e0b4] border border-[#9a9a9a] rounded-[3px] pl-[9px] leading-[25px]">Em Andamento</div>
                  <div class="h-[27px] bg-[#c6e0b4] border border-[#9a9a9a] rounded-[3px] pl-[9px] leading-[25px]">Não Iniciado</div>
                </div>
              </div>
            </div>

            <div class="w-[173px] shrink-0 mt-[1px]">
              <!-- status da acao -->
              <div class="h-[125px] border border-[#70ad47] px-[9px]">
                <div class="flex items-center h-[25px] border-b border-[#70ad47]">
                  <span class="mt-[1px] text-[12.5px] font-semibold text-black">Status da Ação</span>
                  <svg class="ml-auto w-[17px] h-[15px]"><use href="#multi"/></svg>
                  <svg class="ml-[15px] mr-[3px] w-[18px] h-[17px]"><use href="#clear"/></svg>
                </div>
                <div class="flex mt-[5px] h-[84px]">
                  <div class="w-[130px] flex flex-col gap-[3px] overflow-hidden text-[11.7px] text-[#222]">
                    <div class="h-[27px] shrink-0 bg-[#c6e0b4] border border-[#9a9a9a] rounded-[3px] pl-[9px] leading-[25px]">Concluído</div>
                    <div class="h-[27px] shrink-0 bg-[#c6e0b4] border border-[#9a9a9a] rounded-[3px] pl-[9px] leading-[25px]">Em Andamento</div>
                    <div class="h-[27px] shrink-0 bg-[#c6e0b4] border border-[#9a9a9a] rounded-[3px] pl-[9px] leading-[25px]">Não Iniciado</div>
                  </div>
                  <div class="ml-[4px] w-[19px] bg-[#f0f0f0] flex justify-center pt-[20px]"><span class="w-[2px] h-[29px] bg-[#8c8c8c]"></span></div>
                </div>
              </div>
              <!-- responsavel -->
              <div class="h-[83px] mt-[8px] border border-[#70ad47] px-[9px]">
                <div class="flex items-center h-[26px] border-b border-[#70ad47]">
                  <span class="mt-[1px] text-[12.5px] font-semibold text-black">Responsável</span>
                  <svg class="ml-auto w-[17px] h-[15px]"><use href="#multi"/></svg>
                  <svg class="ml-[15px] mr-[3px] w-[18px] h-[17px]"><use href="#clear"/></svg>
                </div>
                <div class="flex mt-[6px] h-[42px]">
                  <div class="w-[130px] text-[11.7px] text-[#222]">
                    <div class="h-[27px] bg-[#c6e0b4] border border-[#9a9a9a] rounded-[3px] pl-[9px] leading-[25px]">Yuri Azevedo</div>
                  </div>
                  <div class="ml-[4px] w-[19px] bg-[#f0f0f0]"></div>
                </div>
              </div>
            </div>
          </div>
        </div>

        <!-- graficos -->
        <div class="ml-[19px] w-[681px] shrink-0">
          <div class="h-[21px] bg-[#70bf44] text-white text-center text-[15px] leading-[22px] font-semibold tracking-[0.4px] font-['Roboto',sans-serif]">STATUS DAS AÇÕES</div>
          <div class="flex items-start mt-[2px] ml-[3px]">
            <svg class="w-[469px] h-[172px] border border-[#d9d9d9] box-border" viewBox="1 1 467 170" fill="#595959" font-size="11" font-family="Open Sans">
              <rect x="107" y="16" width="7" height="8" fill="#b3d7b9"/><text x="117" y="24">Concluído</text>
              <rect x="184" y="16" width="7" height="8" fill="#e8d28a"/><text x="195" y="24">Em Andamento</text>
              <rect x="291" y="16" width="7" height="8" fill="#e6b0b7"/><text x="301" y="24">Não Iniciado</text>
              <path d="M24.500 48v91M107.500 48v91M190.500 48v91M272.500 48v91M355.500 48v91M438.500 48v91" stroke="#d9d9d9"/>
              <rect x="26.500" y="72.500" width="223" height="41" fill="#c6efce" stroke="#b3d7b9" stroke-width="5"/>
              <rect x="254.500" y="72.500" width="67" height="41" fill="#ffeb9c" stroke="#e8d28a" stroke-width="5"/>
              <rect x="326.500" y="73.500" width="109" height="41" fill="#ffc7ce" stroke="#e6b0b7" stroke-width="5"/>
              <g text-anchor="middle" font-weight="700"><text x="138" y="97">32</text><text x="288" y="97">10</text><text x="381" y="97">16</text></g>
              <g text-anchor="middle"><text x="24" y="158">0%</text><text x="107" y="158">20%</text><text x="190" y="158">40%</text><text x="272" y="158">60%</text><text x="355" y="158">80%</text><text x="438" y="158">100%</text></g>
            </svg>
            <svg class="ml-[9px] mt-[1px] w-[196px] h-[172px] border border-[#d9d9d9] box-border" viewBox="1 1 194 170" fill="#595959" font-size="11" font-family="Open Sans">
              <clipPath id="a1"><path d="M98 85V26A59 59 0 1 1 79.180 140.920Z"/></clipPath>
              <clipPath id="a2"><path d="M98 85L79.180 140.920A59 59 0 0 1 39.770 94.530Z"/></clipPath>
              <clipPath id="a3"><path d="M98 85L39.770 94.530A59 59 0 0 1 98 26Z"/></clipPath>
              <path d="M98 85V26A59 59 0 1 1 79.180 140.920Z" clip-path="url(#a1)" fill="#c6efce" stroke="#b3d7b9" stroke-width="10"/>
              <path d="M98 85L79.180 140.920A59 59 0 0 1 39.770 94.530Z" clip-path="url(#a2)" fill="#ffeb9c" stroke="#e8d28a" stroke-width="10"/>
              <path d="M98 85L39.770 94.530A59 59 0 0 1 98 26Z" clip-path="url(#a3)" fill="#ffc7ce" stroke="#e6b0b7" stroke-width="10"/>
              <g text-anchor="middle" font-weight="700"><text x="135" y="101">55%</text><text x="66" y="114">17%</text><text x="66" y="64">28%</text></g>
            </svg>
          </div>

          <div class="h-[21px] mt-[4px] bg-[#70bf44] text-white text-center text-[15px] leading-[22px] font-semibold tracking-[0.4px] font-['Roboto',sans-serif]">STATUS DAS ENTREGAS</div>
          <div class="flex items-start mt-[3px] ml-[4px]">
            <svg class="w-[469px] h-[171px] border border-[#d9d9d9] box-border" viewBox="1 1 467 169" fill="#595959" font-size="11" font-family="Open Sans">
              <rect x="107" y="16" width="7" height="8" fill="#b3d7b9"/><text x="117" y="24">Concluído</text>
              <rect x="184" y="16" width="7" height="8" fill="#e8d28a"/><text x="195" y="24">Em Andamento</text>
              <rect x="291" y="16" width="7" height="8" fill="#e6b0b7"/><text x="301" y="24">Não Iniciado</text>
              <path d="M24.500 48v91M107.500 48v91M190.500 48v91M272.500 48v91M355.500 48v91M438.500 48v91" stroke="#d9d9d9"/>
              <rect x="26.500" y="73.500" width="242" height="41" fill="#c6efce" stroke="#b3d7b9" stroke-width="5"/>
              <rect x="273.500" y="73.500" width="47" height="41" fill="#ffeb9c" stroke="#e8d28a" stroke-width="5"/>
              <rect x="325.500" y="73.500" width="110" height="41" fill="#ffc7ce" stroke="#e6b0b7" stroke-width="5"/>
              <g text-anchor="middle" font-weight="700"><text x="148" y="97">81</text><text x="298" y="97">17</text><text x="381" y="97">37</text></g>
              <g text-anchor="middle"><text x="24" y="158">0%</text><text x="107" y="158">20%</text><text x="190" y="158">40%</text><text x="272" y="158">60%</text><text x="355" y="158">80%</text><text x="438" y="158">100%</text></g>
            </svg>
            <svg class="ml-[9px] mt-[2px] w-[196px] h-[171px] border border-[#d9d9d9] box-border" viewBox="1 1 194 169" fill="#595959" font-size="11" font-family="Open Sans">
              <clipPath id="b1"><path d="M98 85V26A59 59 0 1 1 63.320 132.730Z"/></clipPath>
              <clipPath id="b2"><path d="M98 85L63.320 132.730A59 59 0 0 1 39.670 93.890Z"/></clipPath>
              <clipPath id="b3"><path d="M98 85L39.670 93.890A59 59 0 0 1 98 26Z"/></clipPath>
              <path d="M98 85V26A59 59 0 1 1 63.320 132.730Z" clip-path="url(#b1)" fill="#c6efce" stroke="#b3d7b9" stroke-width="10"/>
              <path d="M98 85L63.320 132.730A59 59 0 0 1 39.670 93.890Z" clip-path="url(#b2)" fill="#ffeb9c" stroke="#e8d28a" stroke-width="10"/>
              <path d="M98 85L39.670 93.890A59 59 0 0 1 98 26Z" clip-path="url(#b3)" fill="#ffc7ce" stroke="#e6b0b7" stroke-width="10"/>
              <g text-anchor="middle" font-weight="700"><text x="134" y="104">60%</text><text x="62" y="107">13%</text><text x="67" y="64">27%</text></g>
            </svg>
          </div>
        </div>

        <!-- celulas soltas -->
        <div class="ml-[138px] mt-[1px] grid grid-cols-[66px_65px_68px] auto-rows-[20px] text-[14px] leading-[20px] text-black">
          <span>Minimo</span><span class="text-right">90</span><span class="text-right">28,8</span>
          <span>Target</span><span class="text-right">95</span><span class="text-right">30,4</span>
          <span>Máximo</span><span class="text-right">100</span><span class="text-right">32</span>
        </div>
      </div>
    </div>
  </div>
</div>
</body>
</html>
